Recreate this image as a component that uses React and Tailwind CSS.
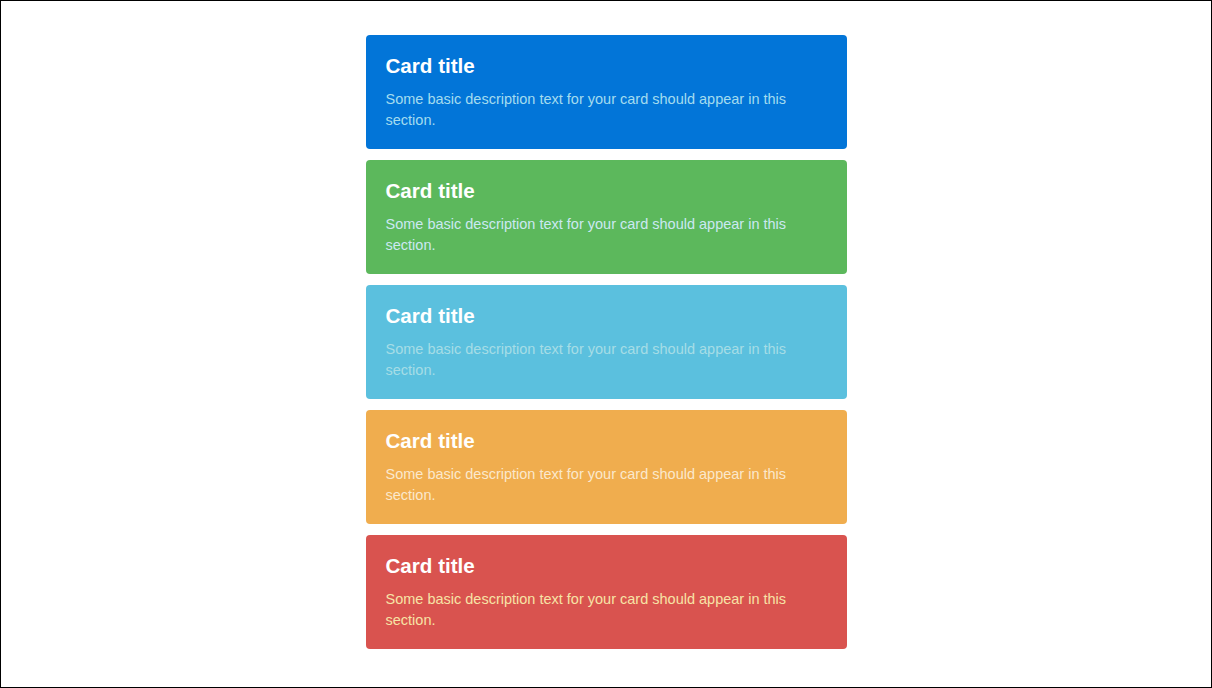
import React from 'react';

const cards = [
  { bg: 'bg-[#0275d8]', text: 'text-[#a4dcef]' },
  { bg: 'bg-[#5cb85c]', text: 'text-[#cbe9f2]' },
  { bg: 'bg-[#5bc0de]', text: 'text-[#a6dde6]' },
  { bg: 'bg-[#f0ad4e]', text: 'text-[#fbe8cc]' },
  { bg: 'bg-[#d9534f]', text: 'text-[#f7e3a6]' },
];

export default function App() {
  return (
    <div
      className="h-[688px] w-[1212px] border border-black bg-white pt-[34px]"
      style={{ fontFamily: '"Liberation Sans", Arial, sans-serif' }}
    >
      <div className="mx-auto flex w-[481px] flex-col gap-[11px]">
        {cards.map((c, i) => (
          <div key={i} className={`${c.bg} h-[114px] rounded-[4px] px-5 pt-[20px]`}>
            <h3 className="mb-3 text-[20.6px] font-bold leading-[22px] text-white">Card title</h3>
            <p className={`${c.text} text-[14.5px] leading-[21px]`}>
              Some basic description text for your card should appear in this section.
            </p>
          </div>
        ))}
      </div>
    </div>
  );
}
